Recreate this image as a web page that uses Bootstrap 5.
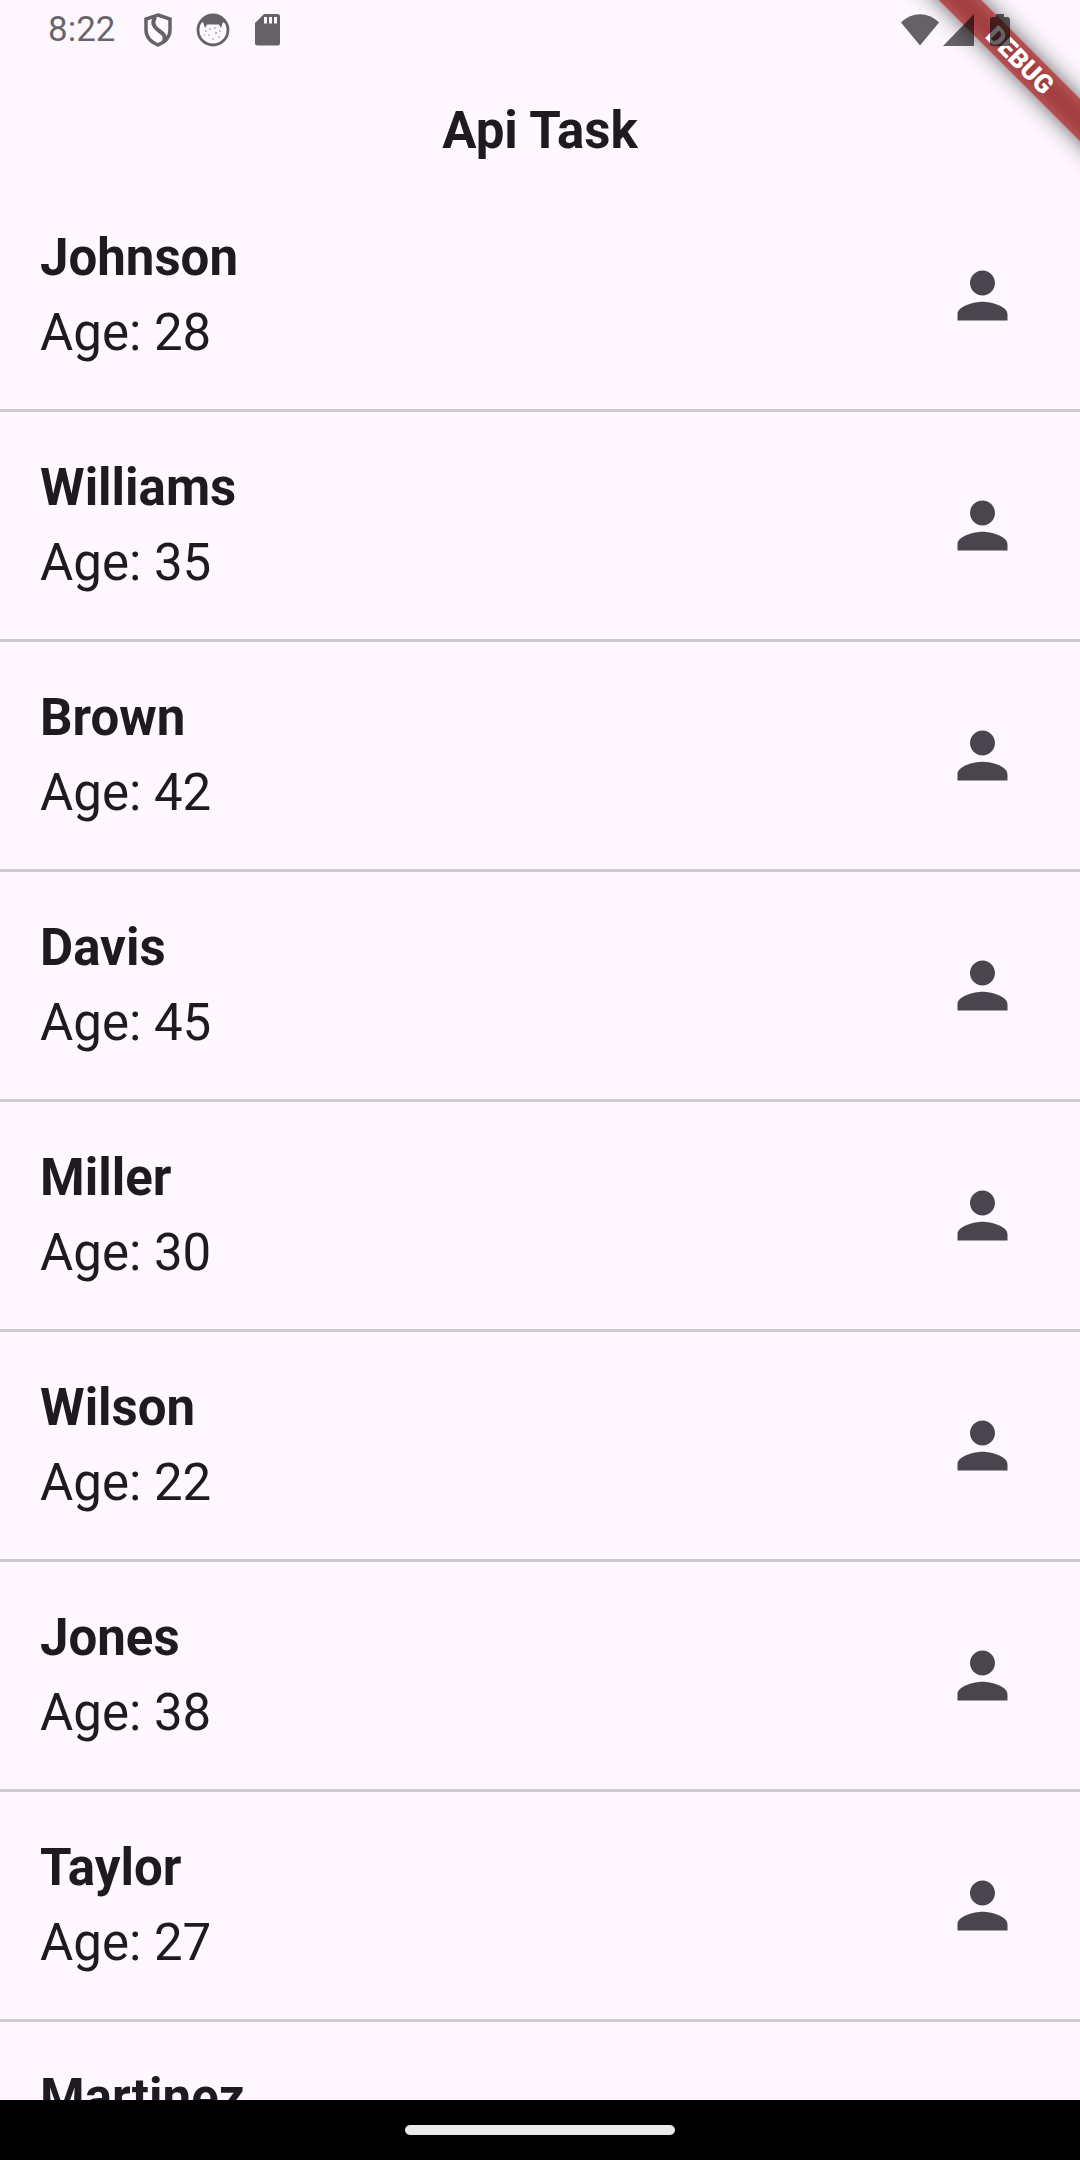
<!DOCTYPE html>
<html lang="en">
<head>
<meta charset="utf-8">
<meta name="viewport" content="width=device-width, initial-scale=1">
<title>Api Task</title>
<link href="https://cdn.jsdelivr.net/npm/bootstrap@5.3.0/dist/css/bootstrap.min.css" rel="stylesheet">
<style>
  body { font-family: Roboto, "Liberation Sans", sans-serif; background: #fef7ff; color: #1d1b20; font-size: 51px; line-height: 75px; }
  .status-bar { height: 60px; padding: 0 70px 0 48px; z-index: 3; }
  .status-bar svg { opacity: .6; color: #000; }
  .clock { font-size: 35px; line-height: 60px; min-width: 92px; color: rgba(0, 0, 0, .6); }
  .notices { gap: 19px; }
  .app-bar { height: 140px; padding-top: 2px; }
  .app-title { font-size: 51px; line-height: 60px; }
  .people { min-height: 0; }
  .person { padding: 20px 60px 20px 40px; }
  .person svg { width: 75px; height: 75px; fill: #49454f; }
  .person-name { font-size: 51px; line-height: 75px; }
  .separator { height: 3px; margin: 19px 0 18px; background: #cfc9d5; opacity: 1; border: 0; }
  .nav-bar { height: 60px; background: #000; z-index: 2; }
  .home-pill { width: 25%; height: 10px; background: #ebebeb; border: 0; padding: 0; }
  .banner-corner { width: 200px; height: 200px; top: 0; right: 0; z-index: 2; pointer-events: none; }
  .debug-band, .debug-shade { width: 300px; height: 30px; top: 45px; right: -90px; transform: rotate(45deg); }
  .debug-band { background: rgba(183, 28, 28, .63); color: #fff; font-size: 26px; line-height: 30px; font-weight: 900; }
  .debug-shade { background: rgba(0, 0, 0, .6); filter: blur(11px); }
</style>
<script src="https://cdn.jsdelivr.net/npm/bootstrap@5.3.0/dist/js/bootstrap.bundle.min.js"></script>
</head>
<body>
<svg class="d-none" aria-hidden="true">
  <symbol id="person" viewBox="0 0 24 24"><path d="M12 12c2.210 0 4-1.790 4-4s-1.790-4-4-4-4 1.790-4 4 1.790 4 4 4zm0 2c-2.670 0-8 1.340-8 4v2h16v-2c0-2.660-5.330-4-8-4z"/></symbol>
</svg>
<div class="vh-100 d-flex flex-column overflow-hidden position-relative">
  <div class="banner-corner position-absolute overflow-hidden" aria-hidden="true">
    <div class="debug-shade position-absolute"></div>
    <div class="debug-band position-absolute text-center">DEBUG</div>
  </div>
  <div class="status-bar d-flex align-items-center flex-shrink-0 position-relative">
    <span class="clock">8:22</span>
    <div class="notices d-flex">
      <svg width="36" height="36" viewBox="0 0 36 36" fill="none" stroke="currentColor" stroke-width="3.500"><path d="M18 3 30 7V18C30 25 25 30 18 33 11 30 6 25 6 18V7Z"/><path stroke-width="4" d="M15 5C12 11 13 14 18 18 24 22 26 24 24 30"/></svg>
      <svg width="36" height="36" viewBox="0 0 36 36"><circle cx="18" cy="18" r="15" fill="none" stroke="currentColor" stroke-width="2.800"/><path fill="currentColor" d="M5 12C9 0 27 0 31 12L28 10 26 16 24 12.500H12L10 16 8 10Z"/><g fill="currentColor" opacity=".45"><circle cx="11" cy="19" r="1"/><circle cx="15" cy="17" r="1"/><circle cx="20" cy="16" r="1"/><circle cx="25" cy="19" r="1"/><circle cx="21" cy="21" r="1.200"/><circle cx="14" cy="23" r="1"/><circle cx="10" cy="23" r=".8"/><circle cx="18" cy="27" r="1"/><circle cx="24" cy="25" r="1"/></g></svg>
      <svg width="36" height="36" viewBox="0 0 36 36" fill="currentColor"><path fill-rule="evenodd" d="M14 2H27.500Q30 2 30 4.500V31Q30 33.500 27.500 33.500H7.500Q5 33.500 5 31V11ZM14 5V11.500H17V5ZM19 5V11.500H22V5ZM24 5V11.500H27V5Z"/></svg>
    </div>
    <svg class="ms-auto" width="38" height="32" viewBox="0 0 38 32" fill="currentColor"><path d="M0 8.500C11-2.500 27-2.500 38 8.500L19 31.500Z"/></svg>
    <svg class="ms-1" width="31" height="32" viewBox="0 0 31 32" fill="currentColor"><path d="M0 32 31 0V32Z"/></svg>
    <svg class="ms-3" width="20" height="32" viewBox="0 0 20 32" fill="currentColor"><path d="M6 0H14V3H17Q20 3 20 6V29Q20 32 17 32H3Q0 32 0 29V6Q0 3 3 3H6Z"/></svg>
  </div>
  <header class="app-bar d-flex align-items-center justify-content-center flex-shrink-0">
    <h1 class="app-title fw-bold m-0">Api Task</h1>
  </header>
  <main class="people flex-grow-1 overflow-hidden">
    <div class="person d-flex align-items-center justify-content-between"><div><h2 class="person-name fw-bold m-0">Johnson</h2><p class="m-0">Age: 28</p></div><svg aria-hidden="true"><use href="#person"/></svg></div>
    <hr class="separator">
    <div class="person d-flex align-items-center justify-content-between"><div><h2 class="person-name fw-bold m-0">Williams</h2><p class="m-0">Age: 35</p></div><svg aria-hidden="true"><use href="#person"/></svg></div>
    <hr class="separator">
    <div class="person d-flex align-items-center justify-content-between"><div><h2 class="person-name fw-bold m-0">Brown</h2><p class="m-0">Age: 42</p></div><svg aria-hidden="true"><use href="#person"/></svg></div>
    <hr class="separator">
    <div class="person d-flex align-items-center justify-content-between"><div><h2 class="person-name fw-bold m-0">Davis</h2><p class="m-0">Age: 45</p></div><svg aria-hidden="true"><use href="#person"/></svg></div>
    <hr class="separator">
    <div class="person d-flex align-items-center justify-content-between"><div><h2 class="person-name fw-bold m-0">Miller</h2><p class="m-0">Age: 30</p></div><svg aria-hidden="true"><use href="#person"/></svg></div>
    <hr class="separator">
    <div class="person d-flex align-items-center justify-content-between"><div><h2 class="person-name fw-bold m-0">Wilson</h2><p class="m-0">Age: 22</p></div><svg aria-hidden="true"><use href="#person"/></svg></div>
    <hr class="separator">
    <div class="person d-flex align-items-center justify-content-between"><div><h2 class="person-name fw-bold m-0">Jones</h2><p class="m-0">Age: 38</p></div><svg aria-hidden="true"><use href="#person"/></svg></div>
    <hr class="separator">
    <div class="person d-flex align-items-center justify-content-between"><div><h2 class="person-name fw-bold m-0">Taylor</h2><p class="m-0">Age: 27</p></div><svg aria-hidden="true"><use href="#person"/></svg></div>
    <hr class="separator">
    <div class="person d-flex align-items-center justify-content-between"><div><h2 class="person-name fw-bold m-0">Martinez</h2></div></div>
  </main>
  <footer class="nav-bar d-flex align-items-center justify-content-center flex-shrink-0"><button class="home-pill rounded-pill" type="button" aria-label="Home"></button></footer>
</div>
</body>
</html>
